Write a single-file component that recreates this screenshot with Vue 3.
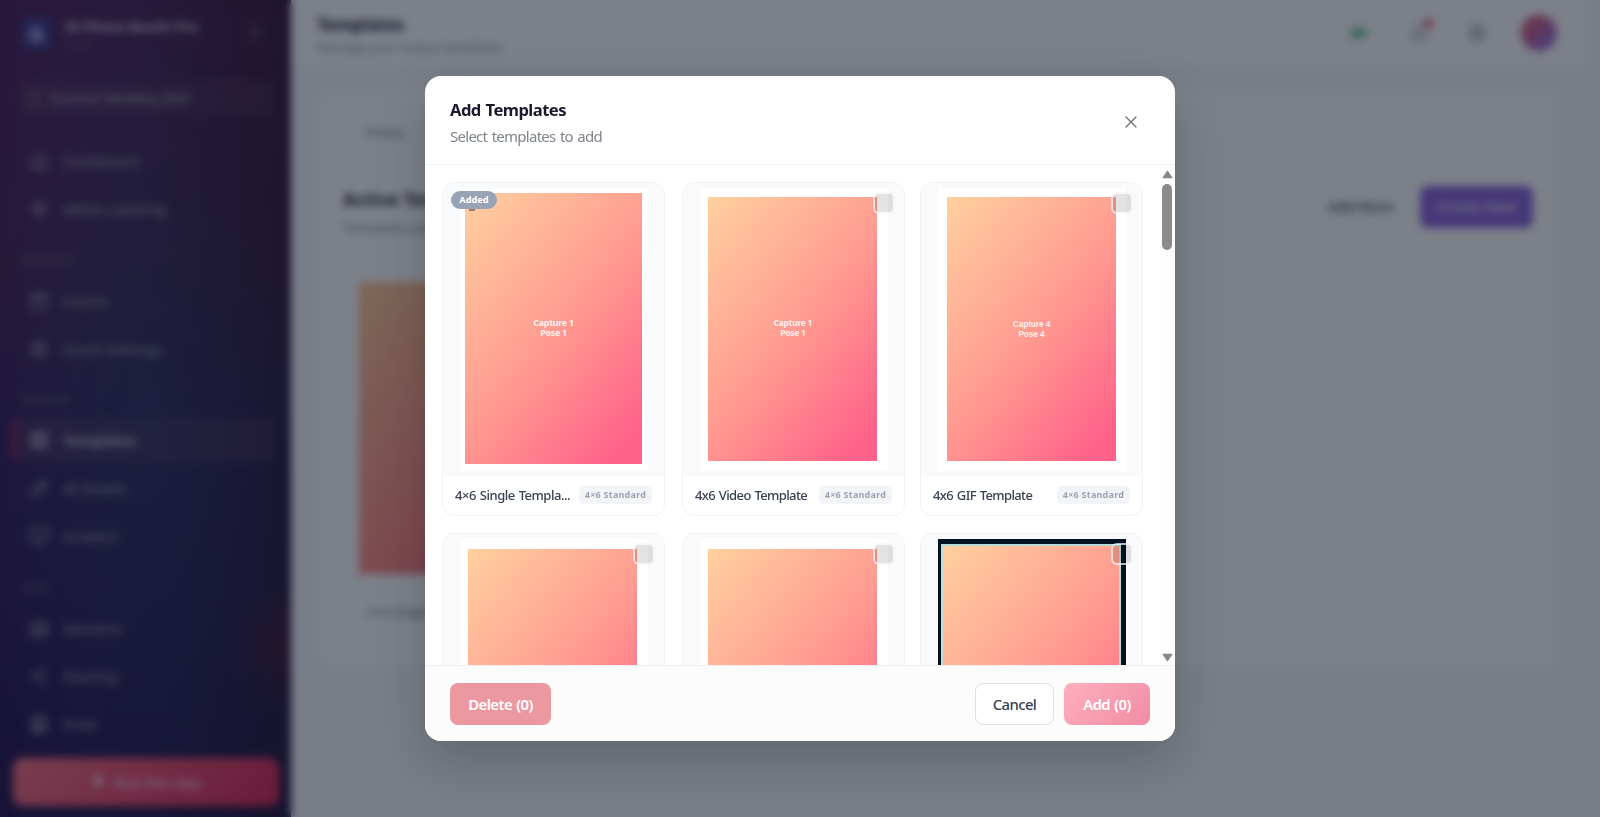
<script setup>
const nav = [
  { label: 'Dashboard', icon: 'home' },
  { label: 'White Labeling', icon: 'tag' },
  { section: 'MANAGE' },
  { label: 'Events', icon: 'calendar' },
  { label: 'Event Settings', icon: 'gear' },
  { section: 'DESIGN' },
  { label: 'Templates', icon: 'grid', active: true },
  { label: 'AI Assets', icon: 'pen' },
  { label: 'Screens', icon: 'screen' },
  { section: 'LIVE' },
  { label: 'Sessions', icon: 'camera' },
  { label: 'Sharing', icon: 'share' },
  { label: 'Print', icon: 'printer' },
]

const icons = {
  home: 'M4 11 12 4l8 7v9H4zM10 20v-6h4v6',
  tag: 'M4 12 12 4l8 8-8 8zM9 12h6M12 9v6',
  calendar: 'M4 6h16v15H4zM4 10h16M8 3v5M16 3v5',
  gear: 'M12 3l7 4v10l-7 4-7-4V7zM12 9a3 3 0 1 0 0 6 3 3 0 0 0 0-6z',
  grid: 'M4 4h6v6H4zM14 4h6v6h-6zM4 14h6v6H4zM14 14h6v6h-6z',
  pen: 'M4 20l2-7L16 4l4 4-10 10zM12 6l6 6',
  screen: 'M3 4h18v12H3zM8 20h8M12 16v4',
  camera: 'M3 8h5l2-3h4l2 3h5v12H3zM12 10a4 4 0 1 0 0 8 4 4 0 0 0 0-8z',
  share: 'M18 5 6 12l12 7M18 3v4M18 17v4M5 10v4',
  printer: 'M7 9V3h10v6M4 9h16v9H4zM8 14h8v7H8z',
}

const templates = [
  { name: '4×6 Single Templa...', kind: 'single', line: '1', added: true },
  { name: '4x6 Video Template', kind: 'plain', line: '1' },
  { name: '4x6 GIF Template', kind: 'plain shifted', line: '4' },
  { name: '4x6 Photo Template', kind: 'plain low', line: '1' },
  { name: '4x6 Boomerang', kind: 'plain low', line: '1' },
  { name: '4x6 Framed', kind: 'framed', line: '1' },
]
</script>

<template>
  <div class="app">
    <aside class="sidebar">
      <div class="brand">
        <div class="logo">
          <svg viewBox="0 0 24 24"><path d="M5 18V10l8-5v13zM13 10a5 5 0 0 1 5 5v4H9" /></svg>
        </div>
        <div class="brand-text">
          <b>AI Photo Booth Pro</b>
          <span>v1.0.0</span>
        </div>
        <div class="collapse">
          <svg viewBox="0 0 24 24"><path d="M5 7h14M5 12h14M5 17h14" /></svg>
        </div>
      </div>
      <div class="event">
        <svg viewBox="0 0 24 24"><path :d="icons.calendar" /></svg>
        <span>Summer Wedding 2025</span>
      </div>
      <nav>
        <template v-for="(n, i) in nav" :key="i">
          <div v-if="n.section" class="section">{{ n.section }}</div>
          <div v-else class="item" :class="{ active: n.active }">
            <svg viewBox="0 0 24 24"><path :d="icons[n.icon]" /></svg>
            <span>{{ n.label }}</span>
          </div>
        </template>
      </nav>
      <div class="run">
        <svg viewBox="0 0 24 24"><path d="M5 3h14v9l-9 9-5-5z" /></svg>
        <span>Run this App</span>
      </div>
    </aside>

    <main>
      <header class="topbar">
        <div class="page-title">
          <b>Templates</b>
          <span>Manage your output templates</span>
        </div>
        <div class="tools">
          <i class="status"></i>
          <div class="bell">
            <svg viewBox="0 0 24 24"><path d="M5 17h14l-2-3V9a5 5 0 0 0-10 0v5zM10 20h4" /></svg>
            <i></i>
          </div>
          <svg class="cog" viewBox="0 0 24 24"><path :d="icons.gear" /></svg>
          <div class="avatar"></div>
        </div>
      </header>
      <section class="panel">
        <div class="tabs">Prints</div>
        <div class="panel-head">
          <div>
            <h2>Active Templates</h2>
            <p>Templates available for this event</p>
          </div>
          <div class="panel-actions">
            <div class="btn-more">Add More</div>
            <div class="btn-new">Create New</div>
          </div>
        </div>
        <div class="active-card">
          <div class="active-art"></div>
          <span>4×6 Single Template</span>
        </div>
      </section>
    </main>

    <div class="overlay">
      <div class="modal">
        <header class="modal-head">
          <div>
            <h1>Add Templates</h1>
            <p>Select templates to add</p>
          </div>
          <svg class="close" viewBox="0 0 12 12"><path d="M1 1l10 10M11 1 1 11" /></svg>
        </header>
        <div class="modal-body">
          <div class="grid">
            <article v-for="t in templates" :key="t.name" class="card">
              <div class="thumb">
                <div class="paper" :class="t.kind">
                  <div class="art"><span>Capture {{ t.line }}</span><span>Pose {{ t.line }}</span></div>
                </div>
                <i v-if="t.added" class="mark"></i>
                <span v-if="t.added" class="added">Added</span>
                <i v-else class="check"></i>
              </div>
              <div class="info">
                <span class="name">{{ t.name }}</span>
                <span class="tag">4×6 Standard</span>
              </div>
            </article>
          </div>
          <div class="scroll">
            <svg viewBox="0 0 10 8"><path d="M5 1 9 7H1z" /></svg>
            <i></i>
            <svg viewBox="0 0 10 8"><path d="M5 7 1 1h8z" /></svg>
          </div>
        </div>
        <footer>
          <button class="delete">Delete (0)</button>
          <button class="cancel">Cancel</button>
          <button class="add">Add (0)</button>
        </footer>
      </div>
    </div>
  </div>
</template>

<style>
body { margin: 0; overflow: hidden; }
</style>

<style scoped>
* { box-sizing: border-box; }
h1, h2, p { margin: 0; }
i { display: block; }
svg { fill: none; stroke: currentColor; stroke-width: 2; stroke-linecap: round; stroke-linejoin: round; flex: none; }
.app {
  width: 1600px; height: 817px; overflow: hidden; display: flex;
  font-family: "Noto Sans", "Open Sans", sans-serif; background: #f8f9fb;
}

/* sidebar */
.sidebar {
  width: 291px; flex: none; padding: 15px 12px 11px; color: #96939f;
  display: flex; flex-direction: column;
  background:
    radial-gradient(circle at 100% 79%, rgba(95, 15, 35, .4), transparent 65px),
    radial-gradient(ellipse at 50% 51%, rgba(32, 50, 88, .6), transparent 170px),
    radial-gradient(ellipse at 26% 20%, rgba(85, 42, 110, .55), transparent 230px),
    linear-gradient(90deg, transparent 45%, rgba(28, 22, 30, .4)),
    linear-gradient(180deg, #3c1042 0%, #360f3c 34%, #240f4c 52%, #1e0e4a 85%, #200f48 100%);
}
.brand { display: flex; align-items: flex-start; height: 65px; padding: 0 7px; }
.logo { width: 31px; height: 33px; margin: 2px 1px 0 2px; border-radius: 8px; background: #3b3088; color: #c8c4e8; padding: 5px; }
.logo svg { width: 21px; height: 23px; display: block; stroke-width: 3; }
.brand-text { margin: 0 0 0 12px; flex: 1; }
.brand-text b { display: block; font-size: 14px; line-height: 23px; color: #c8c1d0; white-space: nowrap; }
.brand-text span { display: block; font-size: 10px; line-height: 12px; color: #705a7b; }
.collapse { width: 34px; height: 34px; border-radius: 8px; background: rgba(255,255,255,.02); padding: 9px; }
.collapse svg { width: 16px; height: 16px; display: block; opacity: .5; }
.event {
  height: 35px; margin: 0 4px 22px 6px; padding: 0 8px; border-radius: 8px; display: flex; align-items: center; gap: 7px;
  background: rgba(255,235,235,.05); font-size: 13px; font-weight: 600; letter-spacing: -.3px; white-space: nowrap;
}
.event svg { width: 16px; height: 16px; opacity: .5; }
nav { display: flex; flex-direction: column; }
.item { height: 44px; margin: 2px 4px 2px 0; padding-left: 14px; display: flex; align-items: center; gap: 13px; font-size: 14.5px; font-weight: 500; border-left: 4px solid transparent; border-radius: 8px; white-space: nowrap; }
.item svg { width: 22px; height: 22px; margin-left: -2px; }
.item.active { background: rgba(255, 170, 170, .08); border-left-color: #a31f48; color: #d4d1dc; font-weight: 600; }
.section { height: 43.5px; padding: 19px 0 0 10px; font-size: 11px; line-height: 16px; font-weight: 600; letter-spacing: 1px; color: #5f5775; }
.run {
  margin: auto 0 0 1px; height: 48px; width: 266px; border-radius: 10px; display: flex; align-items: center; justify-content: center; gap: 10px;
  background: linear-gradient(135deg, #f76c7f, #d81f50); color: #f6bfcb; font-size: 14px; font-weight: 600;
}
.run svg { width: 14px; height: 14px; fill: currentColor; }

/* page behind the dialog */
main { flex: 1; min-width: 0; }
.topbar { height: 67px; width: 1293px; background: #fff; border-bottom: 1px solid #f0f2f5; padding: 14px 26px 0; display: flex; justify-content: space-between; }
.page-title b { display: block; font-size: 17px; line-height: 22px; color: #1a1a2e; }
.page-title span { display: block; font-size: 13px; line-height: 23px; letter-spacing: -.15px; color: #858b98; }
.tools { display: flex; align-items: center; height: 38px; margin-right: 1px; color: #8c92a0; }
.status { width: 17px; height: 10px; border-radius: 6px; background: #68c79a; margin-right: 41px; }
.bell { position: relative; width: 22px; height: 22px; margin-right: 36px; }
.bell i { position: absolute; right: -3px; top: -3px; width: 9px; height: 9px; border-radius: 50%; background: #ef5560; }
.bell svg, .cog { width: 22px; height: 22px; display: block; }
.cog { margin-right: 33px; }
.avatar { width: 36px; height: 36px; border-radius: 50%; background: linear-gradient(135deg, #d05a82 30%, #a068cc 75%); }
.panel { width: 1236px; height: 577px; margin: 22px 0 0 29px; padding: 0 22px; background: #fff; border: 1px solid #f4f5f8; border-radius: 12px; }
.tabs { height: 66px; padding: 31px 23px 0; border-bottom: 1px solid #eef0f3; font-size: 14px; line-height: 24px; color: #6b7280; }
.panel-head { display: flex; justify-content: space-between; padding-top: 30px; height: 106px; }
.panel-head h2 { font-size: 18px; line-height: 27px; color: #1a1a2e; }
.panel-head p { font-size: 13.5px; line-height: 20px; margin-top: 5px; color: #858b98; }
.panel-actions { display: flex; gap: 12px; font-size: 14px; line-height: 42px; font-weight: 600; text-align: center; }
.btn-more { width: 94px; height: 42px; color: #374151; font-weight: 500; }
.btn-new { width: 113px; height: 42px; border-radius: 8px; background: #8660d8; color: #e2d6f8; }
.active-card { width: 240px; height: 379px; border: 1px solid #f0f2f5; border-radius: 12px; padding: 19px 15px; }
.active-art { height: 292px; background: linear-gradient(135deg, #ffc891, #ff9483 50%, #fa5673); }
.active-card span { display: block; margin: 29px 8px; font-size: 13px; color: #6b7280; }

/* dialog */
.overlay {
  position: fixed; inset: 0; width: 1600px; height: 817px; display: flex; align-items: center; justify-content: center;
  background: rgba(17, 23, 40, .55); backdrop-filter: blur(4px);
}
.modal { width: 750px; height: 665px; border-radius: 16px; overflow: hidden; background: #fff; box-shadow: 0 20px 50px rgba(0,0,0,.2); display: flex; flex-direction: column; }
.modal-head { height: 89px; border-bottom: 1px solid #f1f2f4; padding: 21px 38px 0 25px; display: flex; justify-content: space-between; }
.modal-head h1 { font-size: 16.6px; line-height: 26px; font-weight: 700; color: #1a1a2e; letter-spacing: -.55px; word-spacing: 1px; }
.modal-head p { font-size: 15px; line-height: 27px; color: #7f858c; letter-spacing: -.73px; word-spacing: 1.2px; }
.close { width: 12px; height: 12px; margin-top: 19px; stroke-width: 1.2; color: #6b6b6b; }
.modal-body { height: 500px; overflow: hidden; display: flex; justify-content: space-between; padding-left: 17px; }
.grid { display: grid; grid-template-columns: repeat(3, 223px); grid-auto-rows: 334px; gap: 17px 16px; padding-top: 17px; }
.card { border: 1px solid #f1f2f4; border-radius: 12px; overflow: hidden; background: #fff; }
.card:nth-child(3n + 2) { margin: 0 0 0 1px; width: 223px; }
.thumb { position: relative; height: 293px; background: #f9fafb; padding: 5px 17px; }
.paper { width: 188px; height: 283px; background: #fff; padding: 9px 0 0 8.4px; }
.art {
  width: 169px; height: 264px; background: linear-gradient(130deg, #ffd09f 0%, #ff9a90 51%, #ff6289 92%);
  display: flex; flex-direction: column; align-items: center; justify-content: center; padding-bottom: 2px;
  font-size: 8.5px; line-height: 10px; font-weight: 700; letter-spacing: -.25px; color: rgba(255,255,255,.88);
}
.single { padding: 4.5px 0 0 5px; }
.single .art { width: 177px; height: 271px; font-size: 8.9px; padding-bottom: 1px; }
.shifted { padding-left: 9px; }
.shifted .art { font-family: "Liberation Sans", sans-serif; padding: 0; font-size: 8.4px; letter-spacing: -.15px; }
.low { padding-top: 10px; }
.framed { padding: 5px 0 0 3px; background: #021225; }
.framed .art { width: 180px; height: 278px; border: 2px solid #c5dcd5; border-top-color: #b4dad9; }
.check { position: absolute; right: 9px; top: 8.5px; width: 22px; height: 22px; border: 2px solid rgba(255,255,255,.7); border-radius: 6px; background: rgba(0,0,0,.11); }
.mark { position: absolute; left: 26px; top: 26px; width: 6px; height: 2px; background: rgba(90, 60, 45, .55); }
.added { position: absolute; left: 8px; top: 8px; width: 46px; height: 18px; border-radius: 9px; background: #98a3b5; color: #fff; font-size: 9.2px; line-height: 18px; font-weight: 700; text-align: center; }
.info { height: 39px; padding: 0 12px 1px; display: flex; align-items: center; gap: 6px; }
.name { flex: 1; font-size: 13px; line-height: 20px; font-weight: 500; letter-spacing: -.62px; word-spacing: 1px; color: #374151; white-space: nowrap; }
.card:first-child .name { letter-spacing: -.48px; }
.tag { width: 73px; height: 18px; border-radius: 5px; background: #f3f4f8; color: #9ca3af; font-size: 9px; line-height: 17px; font-weight: 700; letter-spacing: .25px; text-align: center; white-space: nowrap; }
.scroll { width: 16px; display: flex; flex-direction: column; align-items: center; padding: 5px 0 3px; background: #fdfdfd; }
.scroll svg { width: 11px; height: 9px; fill: #858585; stroke: #858585; stroke-width: 1; }
.scroll i { width: 10px; height: 66px; border-radius: 5px; background: #8b8b8b; margin: 5px 0 auto; }
footer { flex: 1; border-top: 1px solid #eff0f2; background: #fcfcfd; padding: 17px 25px 0; display: flex; gap: 10px; }
button { height: 42px; border: 0; border-radius: 8px; padding: 0; font: 600 14.8px "Noto Sans", sans-serif; letter-spacing: -.55px; word-spacing: 1px; color: #fff; }
.delete { width: 101px; background: #ec98a1; margin-right: auto; }
.cancel { width: 79px; background: #fff; border: 1px solid #dfe1e5; color: #374151; font-weight: 500; }
.add { width: 86px; background: linear-gradient(135deg, #ffb0bf, #f08ba3); }
</style>
